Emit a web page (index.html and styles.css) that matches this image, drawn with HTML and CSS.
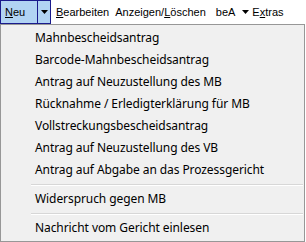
FILE: index.html
```html
<!DOCTYPE html>
<html>
<head>
<meta charset="utf-8">
<link rel="stylesheet" href="styles.css">
</head>
<body>
<div class="toolbar">
  <div class="split">
    <span class="split-main"><u>N</u>eu</span>
    <span class="split-arrow"><svg width="7" height="4" viewBox="0 0 7 4"><path d="M0 0H7L3.5 4Z" fill="#000"/></svg></span>
  </div>
  <span class="tb-item tb-bearbeiten"><u>B</u>earbeiten</span>
  <span class="tb-item tb-anzeigen">Anzeigen/<u>L</u>öschen</span>
  <span class="tb-item tb-bea">beA</span>
  <span class="tb-item tb-extras"><svg width="7" height="4" viewBox="0 0 7 4"><path d="M0 0H7L3.5 4Z" fill="#000"/></svg>E<u>x</u>tras</span>
</div>
<div class="menu">
  <div class="mi">Mahnbescheidsantrag</div>
  <div class="mi">Barcode-Mahnbescheidsantrag</div>
  <div class="mi">Antrag auf Neuzustellung des MB</div>
  <div class="mi">Rücknahme / Erledigterklärung für MB</div>
  <div class="mi">Vollstreckungsbescheidsantrag</div>
  <div class="mi">Antrag auf Neuzustellung des VB</div>
  <div class="mi">Antrag auf Abgabe an das Prozessgericht</div>
  <div class="sep"></div>
  <div class="mi">Widerspruch gegen MB</div>
  <div class="sep"></div>
  <div class="mi">Nachricht vom Gericht einlesen</div>
</div>
</body>
</html>
```
FILE: styles.css
```css
html, body {
  margin: 0;
  padding: 0;
  background: #fff;
}
body {
  width: 306px;
  height: 242px;
  overflow: hidden;
}
.toolbar {
  height: 24px;
  display: flex;
  align-items: stretch;
  font-family: "Liberation Sans", Arial, sans-serif;
  font-size: 11px;
  color: #000;
}
.toolbar u {
  text-decoration: underline;
  text-underline-offset: 1px;
}
.split {
  display: flex;
  border: 1px solid #1a1a8c;
  background: #b1d3f3;
  box-sizing: border-box;
  height: 24px;
  width: 51px;
}
.split-main {
  width: 37px;
  padding-left: 4px;
  box-sizing: border-box;
  display: flex;
  align-items: center;
  border-right: 1px solid #1a1a8c;
}
.split-arrow {
  flex: 1;
  display: flex;
  align-items: center;
  justify-content: center;
}
.tb-item {
  display: flex;
  align-items: center;
  white-space: nowrap;
}
.tb-bearbeiten { margin-left: 5px; }
.tb-anzeigen { margin-left: 6px; }
.tb-bea { margin-left: 10px; }
.tb-extras { margin-left: 7px; }
.tb-extras svg { margin-right: 3px; }
.menu {
  width: 305px;
  height: 218px;
  box-sizing: border-box;
  border: 1px solid #979797;
  background: #f0f0f0;
  padding: 2px 0;
  font-family: "Noto Sans", "Open Sans", sans-serif;
  font-size: 12px;
  letter-spacing: -0.08px;
  color: #000;
}
.mi {
  height: 22px;
  line-height: 22px;
  padding-left: 34px;
  white-space: nowrap;
}
.sep {
  height: 7px;
  margin-left: 30px;
  margin-right: 1px;
  display: flex;
  align-items: center;
}
.sep::before {
  content: "";
  display: block;
  width: 100%;
  height: 1px;
  background: #d7d7d7;
  box-shadow: 0 1px 0 #fff;
}
```
